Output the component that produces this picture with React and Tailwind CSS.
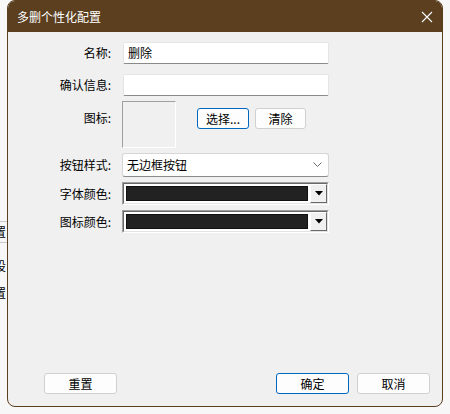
import React from 'react';

const font = { fontFamily: '"Microsoft YaHei", "Noto Sans CJK SC", "Noto Sans", sans-serif' };

function Label({ children }) {
  return <div className="w-[106px] shrink-0 text-right text-[12px] text-black pr-[3px]">{children}</div>;
}

function TextInput({ value }) {
  return (
    <div className="w-[206px] h-[22px] bg-white border border-[#e5e5e5] border-b-[#8a8a8a] rounded-[2px] flex items-center px-[4px] text-[12px] text-black">
      {value}
    </div>
  );
}

function ColorPick() {
  return (
    <div className="w-[207px] h-[23px] flex border border-t-[#a0a0a0] border-l-[#a0a0a0] border-b-white border-r-white">
      <div className="flex-1 flex border border-t-[#696969] border-l-[#696969] border-b-[#e3e3e3] border-r-[#e3e3e3] bg-white">
        <div className="flex-1 m-[2px] bg-[#222] border border-[#111]" />
        <div className="w-[17px] bg-[#f0f0f0] border border-t-white border-l-white border-b-[#696969] border-r-[#696969] flex items-center justify-center">
          <svg width="8" height="5" viewBox="0 0 8 5"><path d="M0 0h8L4 4.5z" fill="#000" /></svg>
        </div>
      </div>
    </div>
  );
}

function Btn({ children, primary, w = 'w-[52px]' }) {
  return (
    <div className={`${w} h-[21px] bg-[#fdfdfd] rounded-[3px] flex items-center justify-center text-[12px] text-black border ${primary ? 'border-[#0067c0]' : 'border-[#d0d0d0]'}`}>
      {children}
    </div>
  );
}

export default function App() {
  return (
    <div className="w-[450px] h-[414px] bg-[#f7f7f7] flex overflow-hidden" style={font}>
      {/* background window peeking on the left */}
      <div className="w-[7px] shrink-0 relative overflow-hidden text-[12px] text-black">
        <div className="absolute left-[-6px] top-[221px] w-[20px] border-t border-b border-[#c8c8c8] h-[22px] leading-[20px]">置</div>
        <div className="absolute left-[-6px] top-[259px] leading-[14px]">设</div>
        <div className="absolute left-[-6px] top-[286px] leading-[14px]">置</div>
      </div>

      <div className="w-[436px] h-[407px] flex flex-col rounded-t-[8px] rounded-b-[8px] overflow-hidden border border-[#5b3f1f] bg-[#f0f0f0]">
        <div className="h-[31px] bg-[#5b3f1f] flex items-center justify-between pl-[9px] pr-[9px] shrink-0">
          <span className="text-white text-[12px]">多删个性化配置</span>
          <svg width="12" height="12" viewBox="0 0 12 12">
            <path d="M1 1L11 11M11 1L1 11" stroke="#fff" strokeWidth="1.1" />
          </svg>
        </div>

        <div className="flex-1 flex flex-col">
          <div className="flex flex-col pt-[10px] pl-0">
            <div className="flex items-center h-[22px]">
              <Label>名称:</Label>
              <div className="ml-[9px]"><TextInput value="删除" /></div>
            </div>
            <div className="flex items-center h-[22px] mt-[10px]">
              <Label>确认信息:</Label>
              <div className="ml-[9px]"><TextInput value="" /></div>
            </div>
            <div className="flex items-start mt-[5px]">
              <div className="mt-[8px]"><Label>图标:</Label></div>
              <div className="ml-[8px] w-[54px] h-[47px] border border-t-[#a0a0a0] border-l-[#a0a0a0] border-b-white border-r-white" />
              <div className="flex gap-[6px] mt-[7px] ml-[21px]">
                <Btn primary>选择...</Btn>
                <Btn w="w-[51px]">清除</Btn>
              </div>
            </div>
            <div className="flex items-center mt-[5px]">
              <Label>按钮样式:</Label>
              <div className="ml-[8px] w-[207px] h-[24px] bg-white border border-[#d6d6d6] border-b-[#8a8a8a] rounded-[3px] flex items-center justify-between pl-[4px] pr-[6px] text-[12px] text-black">
                <span>无边框按钮</span>
                <svg width="9" height="6" viewBox="0 0 9 6"><path d="M0.5 0.5L4.5 4.5L8.5 0.5" stroke="#6a6a6a" fill="none" /></svg>
              </div>
            </div>
            <div className="flex items-center mt-[5px]">
              <Label>字体颜色:</Label>
              <div className="ml-[8px]"><ColorPick /></div>
            </div>
            <div className="flex items-center mt-[5px]">
              <Label>图标颜色:</Label>
              <div className="ml-[8px]"><ColorPick /></div>
            </div>
          </div>

          <div className="mt-auto mb-[12px] flex items-center pl-[36px] pr-[12px]">
            <Btn w="w-[73px]">重置</Btn>
            <div className="flex-1" />
            <Btn primary w="w-[73px]">确定</Btn>
            <div className="w-[8px]" />
            <Btn w="w-[73px]">取消</Btn>
          </div>
        </div>
      </div>
    </div>
  );
}
